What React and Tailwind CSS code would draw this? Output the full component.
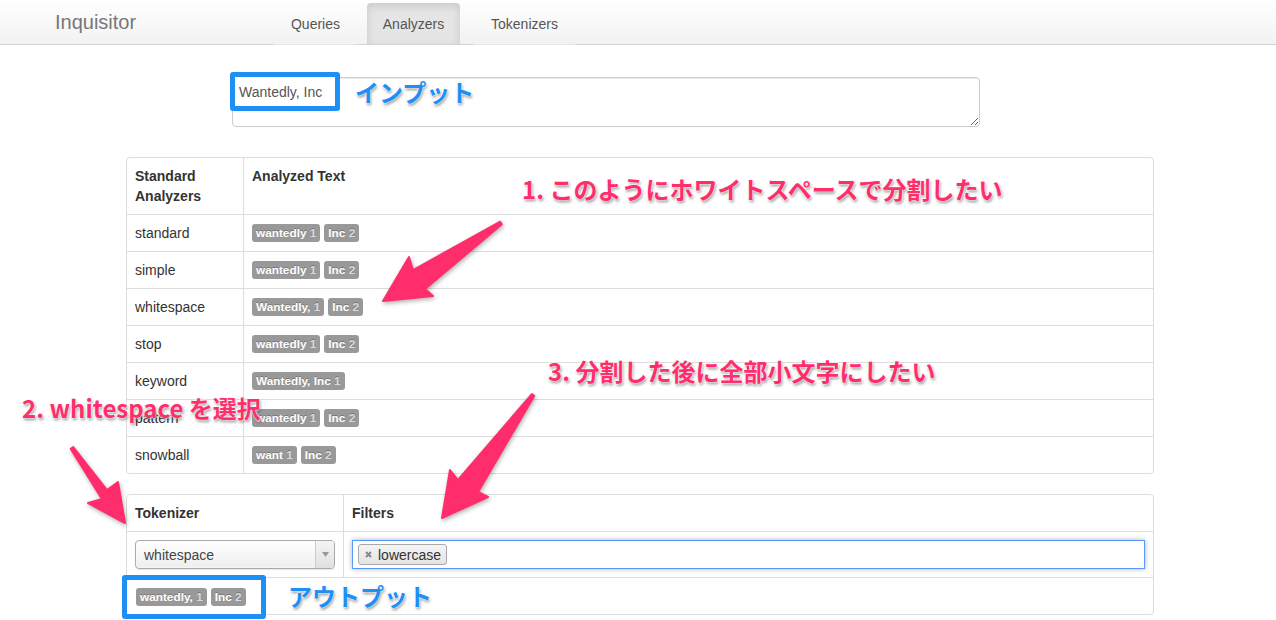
import React from "react";

function Badge({ t, n }) {
  return (
    <span className="inline-block whitespace-nowrap rounded-[3px] bg-[#999999] px-[4px] py-[2px] align-middle font-['Liberation_Sans',Arial,sans-serif] text-[11.8px] font-bold leading-[14px] text-white [text-shadow:0_-1px_0_rgba(0,0,0,0.25)]">
      {t} <span className="text-[#d9d9d9]">{n}</span>
    </span>
  );
}

function Tokens({ items }) {
  return (
    <div className="flex items-center gap-[4px]">
      {items.map(([t, n]) => (
        <Badge key={t} t={t} n={n} />
      ))}
    </div>
  );
}

const std = [["wantedly", 1], ["Inc", 2]];
const rows = [
  ["standard", std],
  ["simple", std],
  ["whitespace", [["Wantedly,", 1], ["Inc", 2]]],
  ["stop", std],
  ["keyword", [["Wantedly, Inc", 1]]],
  ["pattern", std],
  ["snowball", [["want", 1], ["Inc", 2]]],
];

function Arrows() {
  return (
    <svg
      className="pointer-events-none absolute left-0 top-0 h-[620px] w-[1276px] [filter:drop-shadow(1px_2px_2px_rgba(0,0,0,0.3))]"
      viewBox="0 0 1276 620"
    >
      <g fill="#ff2d6c" stroke="#ff2d6c" strokeWidth="2" strokeLinejoin="round">
        <polygon points="500.2,221.7 413,270 409,257 383,301 433,296 425,289 501.8,224.3" />
        <polygon points="531.8,394.1 458,480 450,470 442,518 488,497 478,492 534.2,395.9" />
        <polygon points="73.2,447.1 107,490 118,482 125,523 88,503 102,499 70.8,448.9" />
      </g>
    </svg>
  );
}

const pink =
  "absolute whitespace-nowrap font-['Noto_Sans_CJK_JP',sans-serif] text-[24px] font-bold leading-none text-[#ff2d6c] [text-shadow:0_0_2px_#fff,0_0_2px_#fff,1px_2px_3px_rgba(0,0,0,0.45)]";
const blue =
  "absolute whitespace-nowrap font-['Noto_Sans_CJK_JP',sans-serif] text-[24px] font-bold leading-none text-[#1e8ff5] [text-shadow:0_0_2px_#fff,0_0_2px_#fff,1px_2px_3px_rgba(0,0,0,0.45)]";

export default function App() {
  return (
    <div className="relative h-[620px] w-[1276px] overflow-hidden bg-white font-['Helvetica_Neue','Liberation_Sans',Arial,sans-serif] text-[14px] leading-[20px] text-[#333333]">
      {/* Navbar */}
      <div className="flex h-[45px] items-end border-b border-[#d4d4d4] bg-gradient-to-b from-white to-[#f2f2f2]">
        <div className="w-[274px] self-center pl-[55px] text-[20px] leading-[24px] text-[#777777]">Inquisitor</div>
        <div className="mb-[-1px] flex h-[42px] w-[83px] items-center justify-center border-b border-[#e6e6e6] text-[#555555]">Queries</div>
        <div className="mb-[-1px] ml-[10px] flex h-[42px] w-[93px] items-center justify-center rounded-t-[4px] border-b border-[#d4d4d4] bg-[#e5e5e5] text-[#555555] shadow-[inset_0_3px_8px_rgba(0,0,0,0.125)]">Analyzers</div>
        <div className="mb-[-1px] ml-[14px] flex h-[42px] w-[101px] items-center justify-center border-b border-[#e6e6e6] text-[#555555]">Tokenizers</div>
      </div>

      {/* Input */}
      <div className="ml-[232px] mt-[32px] w-[748px]">
        <textarea
          readOnly
          value="Wantedly, Inc"
          className="block h-[50px] w-[748px] resize-y rounded-[4px] border border-[#cccccc] px-[6px] py-[4px] font-['Helvetica_Neue','Liberation_Sans',Arial,sans-serif] text-[14px] leading-[20px] text-[#555555] shadow-[inset_0_1px_1px_rgba(0,0,0,0.075)] outline-none"
        />
      </div>

      {/* Standard analyzers table */}
      <div className="ml-[126px] mt-[30px] w-[1028px] overflow-hidden rounded-[4px] border border-[#dddddd]">
        <div className="flex">
          <div className="w-[117px] border-r border-[#dddddd] p-[8px] font-bold">
            Standard
            <br />
            Analyzers
          </div>
          <div className="flex-1 p-[8px] font-bold">Analyzed Text</div>
        </div>
        {rows.map(([name, items]) => (
          <div key={name} className="flex border-t border-[#dddddd]">
            <div className="w-[117px] border-r border-[#dddddd] p-[8px]">{name}</div>
            <div className="flex flex-1 items-center px-[8px] py-[8px]">
              <div className="h-[20px] pt-[1px]">
                <Tokens items={items} />
              </div>
            </div>
          </div>
        ))}
      </div>

      {/* Custom analyzer table */}
      <div className="ml-[126px] mt-[20px] w-[1028px] rounded-[4px] border border-[#dddddd]">
        <div className="flex">
          <div className="w-[217px] border-r border-[#dddddd] p-[8px] font-bold">Tokenizer</div>
          <div className="flex-1 p-[8px] font-bold">Filters</div>
        </div>
        <div className="flex border-t border-[#dddddd]">
          <div className="w-[217px] border-r border-[#dddddd] p-[8px]">
            <div className="flex h-[29px] w-full items-stretch overflow-hidden rounded-[4px] border border-[#aaaaaa] bg-gradient-to-b from-white to-[#eeeeee] shadow-[0_0_3px_#fff_inset,0_1px_1px_rgba(0,0,0,0.1)]">
              <div className="flex flex-1 items-center pl-[8px] text-[#444444]">whitespace</div>
              <div className="flex w-[19px] items-center justify-center border-l border-[#cccccc] bg-gradient-to-b from-[#f4f4f4] to-[#e0e0e0]">
                <svg width="7" height="5" viewBox="0 0 7 5">
                  <polygon points="0,0 7,0 3.5,5" fill="#999999" />
                </svg>
              </div>
            </div>
          </div>
          <div className="flex-1 p-[8px]">
            <div className="flex h-[29px] w-full items-center border border-[#5897fb] bg-white px-[5px] shadow-[0_0_5px_rgba(0,0,0,0.3)]">
              <div className="flex h-[21px] items-center gap-[6px] rounded-[3px] border border-[#aaaaaa] bg-gradient-to-b from-[#f4f4f4] to-[#e4e4e4] pl-[6px] pr-[5px] leading-[18px] text-[#333333]">
                <svg width="7" height="7" viewBox="0 0 7 7">
                  <path d="M1 1 L6 6 M6 1 L1 6" stroke="#888888" strokeWidth="2" />
                </svg>
                <span>lowercase</span>
              </div>
            </div>
          </div>
        </div>
        <div className="flex border-t border-[#dddddd]">
          <div className="flex h-[36px] items-center px-[9px]">
            <Tokens items={[["wantedly,", 1], ["Inc", 2]]} />
          </div>
        </div>
      </div>

      {/* Annotation overlays */}
      <div className="absolute left-[230px] top-[72px] flex h-[39px] w-[110px] items-center rounded-[3px] border-[5px] border-[#1e8ff5] bg-white pl-[4px] text-[14px] text-[#555555]">
        Wantedly, Inc
      </div>
      <div className="absolute left-[122px] top-[575px] flex h-[44px] w-[144px] items-center rounded-[3px] border-[5px] border-[#1e8ff5] bg-white pl-[9px]">
        <Tokens items={[["wantedly,", 1], ["Inc", 2]]} />
      </div>

      <div className={blue + " left-[355px] top-[80px]"}>インプット</div>
      <div className={blue + " left-[288px] top-[584px]"}>アウトプット</div>

      <div className={pink + " left-[522px] top-[177px]"}>1. このようにホワイトスペースで分割したい</div>
      <div className={pink + " left-[548px] top-[359px]"}>3. 分割した後に全部小文字にしたい</div>
      <div className={pink + " left-[22px] top-[396px]"}>2. whitespace を選択</div>

      <Arrows />
    </div>
  );
}
